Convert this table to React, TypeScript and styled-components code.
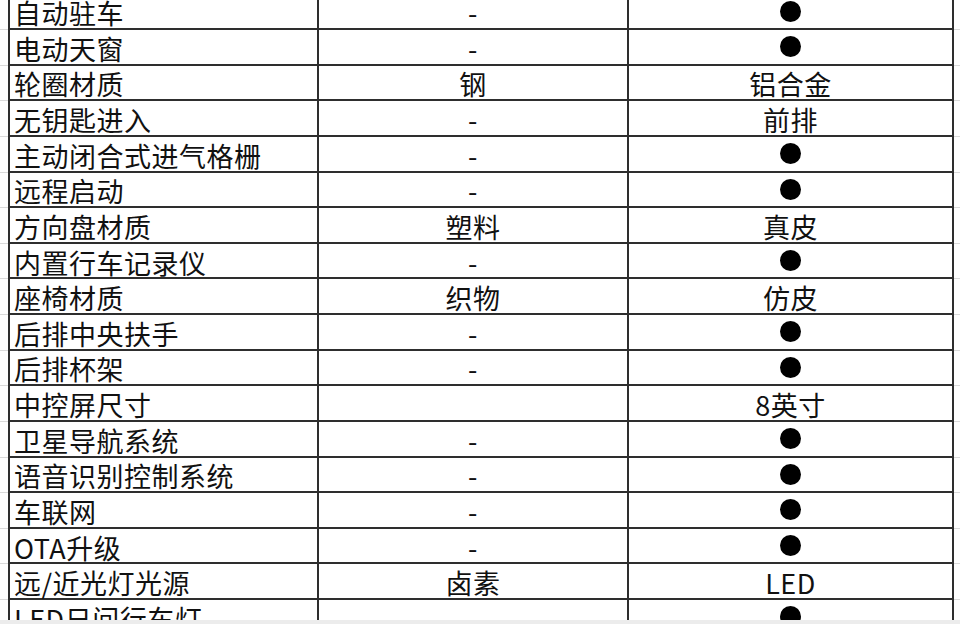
import React from "react";
import styled, { createGlobalStyle } from "styled-components";

const Global = createGlobalStyle`
  html, body { margin: 0; padding: 0; background: #ffffff; }
  body { width: 960px; height: 624px; overflow: hidden; }
`;

const Viewport = styled.div`
  width: 960px;
  height: 624px;
  overflow: hidden;
  display: flex;
  flex-direction: column;
  background: #ffffff;
`;

const Sheet = styled.div`
  flex: 1;
  overflow: hidden;
`;

const Grid = styled.div`
  display: grid;
  grid-template-columns: 8px 309px 310px 327px 1fr;
  grid-auto-rows: 35.625px;
  margin-top: -5.6px;
  font-family: "Noto Sans CJK SC", "Noto Sans", sans-serif;
  color: #111;
`;

const Gutter = styled.div`
  box-sizing: border-box;
  border-bottom: 1px solid #dadada;
`;

const Cell = styled.div<{ $align: "left" | "center"; $last?: boolean }>`
  box-sizing: border-box;
  border-left: 2px solid #2e2e2e;
  border-bottom: 2px solid #2e2e2e;
  ${(p) => (p.$last ? "border-right: 2px solid #2e2e2e;" : "")}
  display: flex;
  align-items: center;
  justify-content: ${(p) => (p.$align === "left" ? "flex-start" : "center")};
  padding: 4px 0 0 ${(p) => (p.$align === "left" ? "4px" : "0")};
  font-size: 27px;
  letter-spacing: 0.5px;
  line-height: 30px;
  white-space: nowrap;
`;

const Dot = styled.span`
  display: inline-block;
  width: 21px;
  height: 21px;
  border-radius: 50%;
  background: #000;
  margin-top: -4px;
`;

const Footer = styled.div`
  height: 4px;
  background: #ececec;
`;

type Row = [string, string, string];

const rows: Row[] = [
  ["自动驻车", "-", "●"],
  ["电动天窗", "-", "●"],
  ["轮圈材质", "钢", "铝合金"],
  ["无钥匙进入", "-", "前排"],
  ["主动闭合式进气格栅", "-", "●"],
  ["远程启动", "-", "●"],
  ["方向盘材质", "塑料", "真皮"],
  ["内置行车记录仪", "-", "●"],
  ["座椅材质", "织物", "仿皮"],
  ["后排中央扶手", "-", "●"],
  ["后排杯架", "-", "●"],
  ["中控屏尺寸", "", "8英寸"],
  ["卫星导航系统", "-", "●"],
  ["语音识别控制系统", "-", "●"],
  ["车联网", "-", "●"],
  ["OTA升级", "-", "●"],
  ["远/近光灯光源", "卤素", "LED"],
  ["LED日间行车灯", "-", "●"],
];

const Value = ({ v }: { v: string }) =>
  v === "●" ? <Dot role="img" aria-label="●" /> : <>{v}</>;

export default function App() {
  return (
    <Viewport>
      <Global />
      <Sheet>
        <Grid>
          {rows.map(([name, a, b], i) => (
            <React.Fragment key={i}>
              <Gutter />
              <Cell $align="left">{name}</Cell>
              <Cell $align="center">
                <Value v={a} />
              </Cell>
              <Cell $align="center" $last>
                <Value v={b} />
              </Cell>
              <Gutter />
            </React.Fragment>
          ))}
        </Grid>
      </Sheet>
      <Footer />
    </Viewport>
  );
}
